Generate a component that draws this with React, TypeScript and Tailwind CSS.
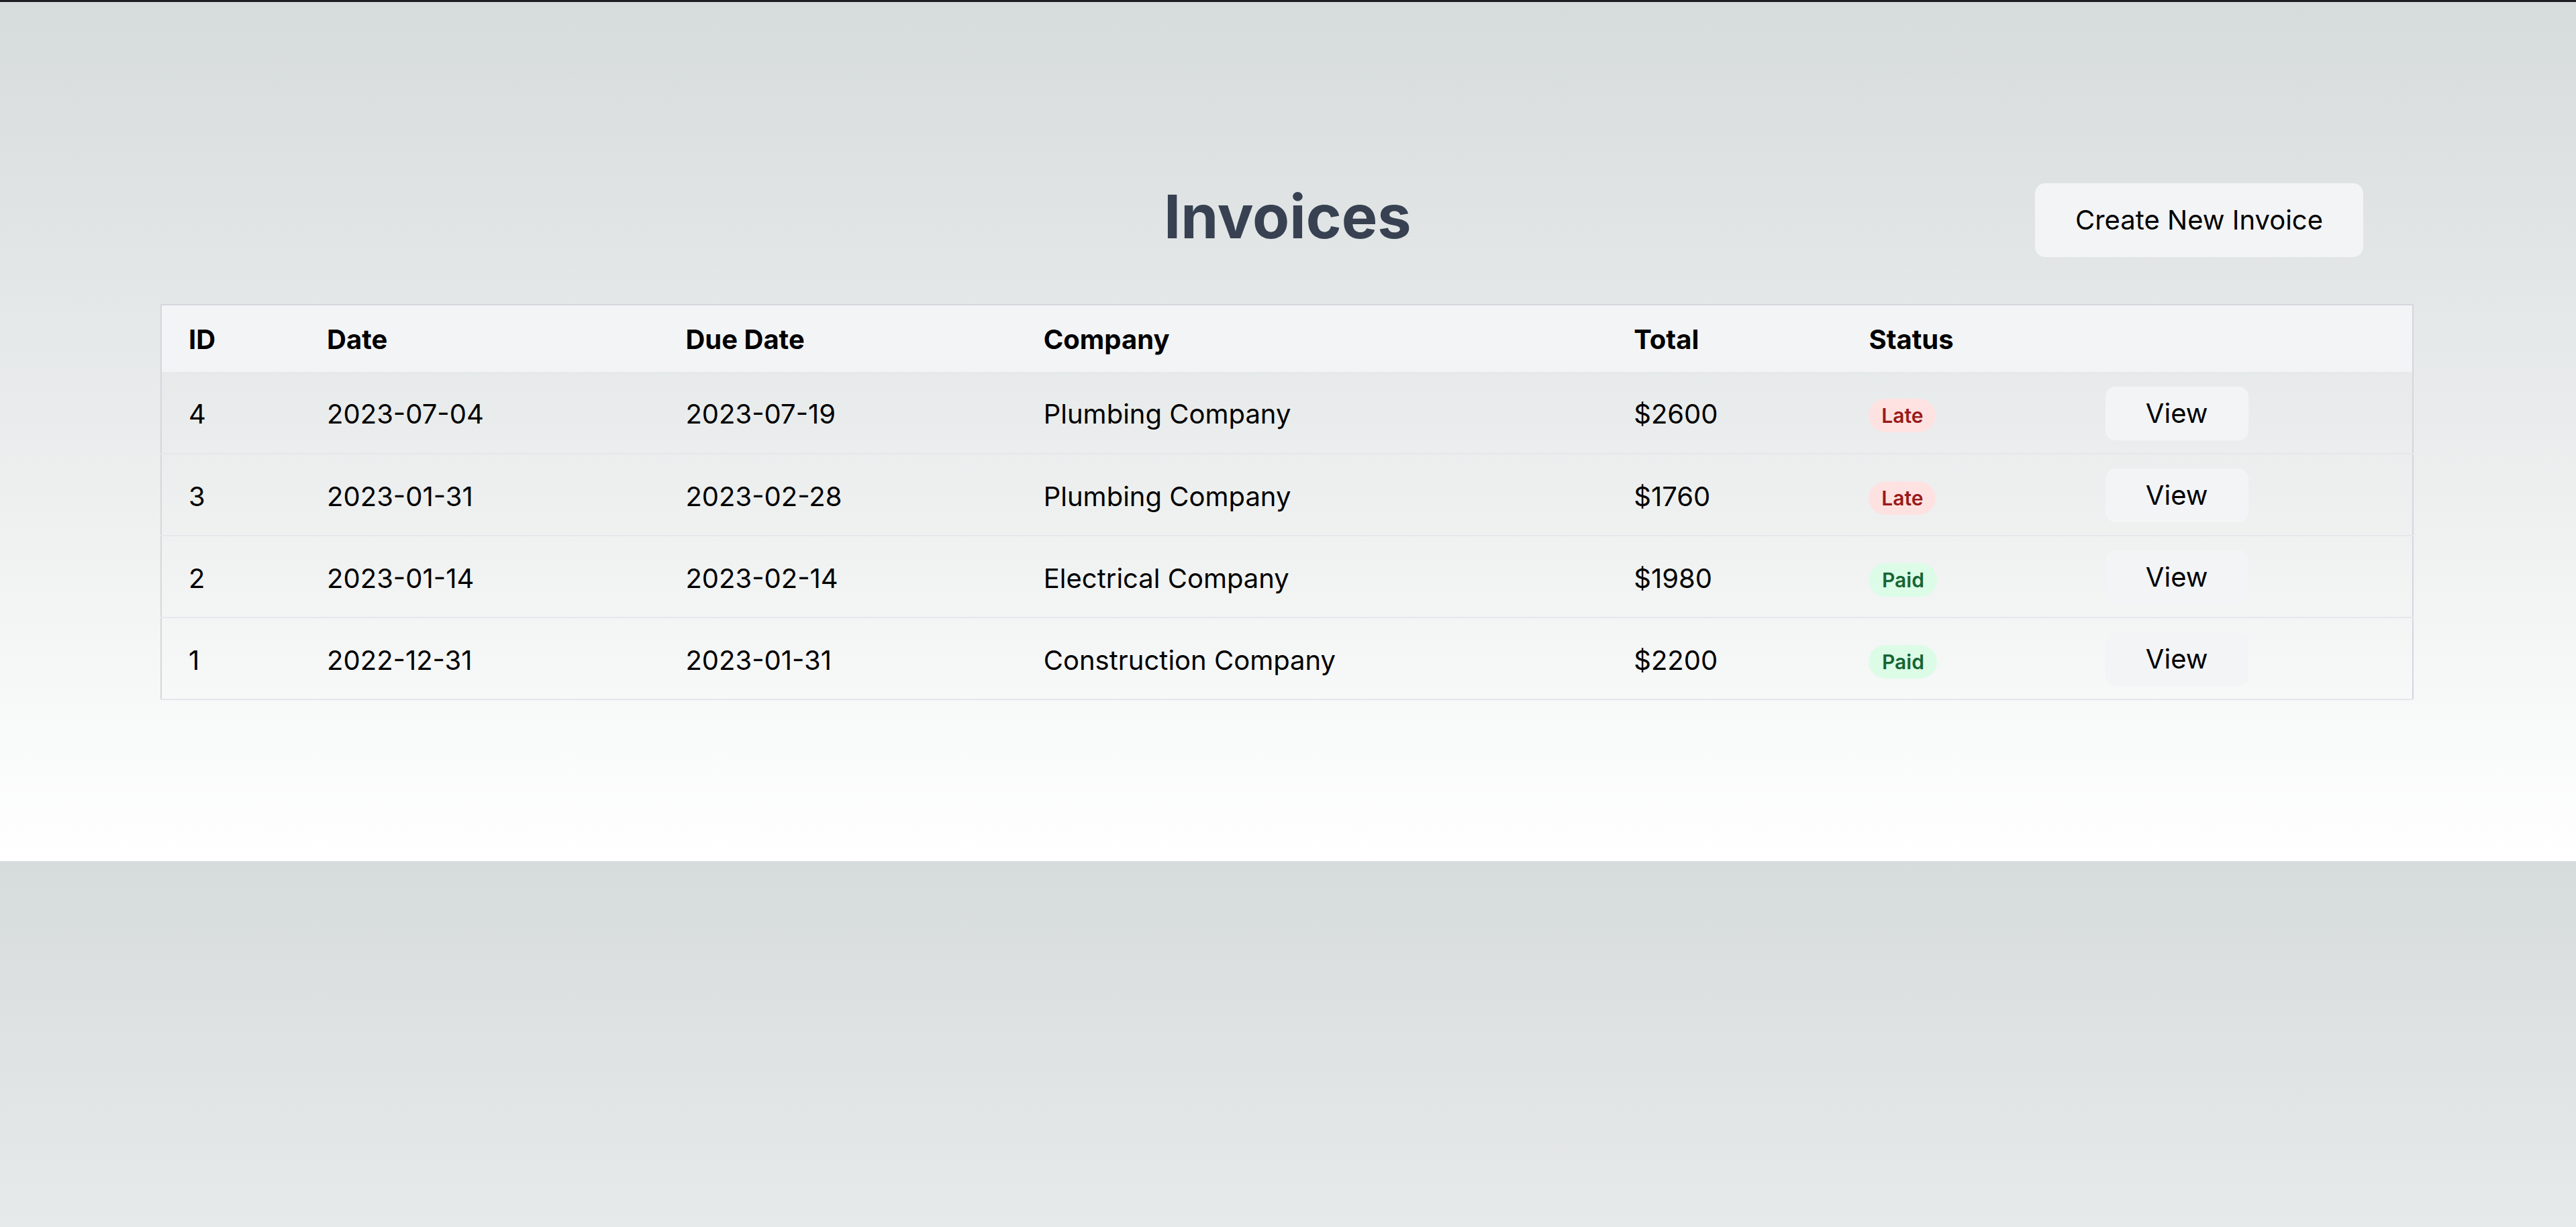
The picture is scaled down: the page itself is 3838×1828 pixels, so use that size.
const invoices = [
  { id: 4, date: '2023-07-04', due: '2023-07-19', company: 'Plumbing Company', total: '$2600', status: 'Late' },
  { id: 3, date: '2023-01-31', due: '2023-02-28', company: 'Plumbing Company', total: '$1760', status: 'Late' },
  { id: 2, date: '2023-01-14', due: '2023-02-14', company: 'Electrical Company', total: '$1980', status: 'Paid' },
  { id: 1, date: '2022-12-31', due: '2023-01-31', company: 'Construction Company', total: '$2200', status: 'Paid' },
];

function StatusBadge({ status }: { status: string }) {
  const late = status === 'Late';
  return (
    <span
      className={
        late
          ? 'inline-flex items-center justify-center w-[100px] h-[50px] rounded-full bg-[#fee2e2] text-[#991b1b] text-[30px] font-semibold'
          : 'inline-flex items-center justify-center w-[102px] h-[50px] rounded-full bg-[#dcfce7] text-[#166534] text-[30px] font-semibold'
      }
    >
      {status}
    </span>
  );
}

export default function App() {
  return (
    <div className="w-full h-[1828px] overflow-hidden font-['Inter','Liberation_Sans',sans-serif] text-black">
      <div className="h-[3px] bg-[#1c1d22]" />
      <div className="h-[1280px] bg-linear-to-b from-[#d6dbdb] to-white px-[239px] pt-[270px]">
        <div className="flex items-start h-[110px]">
          <div className="w-[1495px] shrink-0" />
          <h1 className="mt-[5px] text-[90px] leading-[90px] font-bold text-[#374151]">Invoices</h1>
          <div className="flex-1 flex justify-end pr-[78px]">
            <button className="w-[489px] h-[110px] rounded-[15px] bg-[#f3f4f6] text-[40px] leading-none text-black">
              Create New Invoice
            </button>
          </div>
        </div>

        <table className="mt-[70px] w-[3357px] table-fixed border-collapse border-2 border-[#d4d6dc] text-[40px] leading-none">
          <thead>
            <tr className="bg-[#f3f4f6] h-[100px] text-left font-bold">
              <th className="w-[207px] pl-[40px] pt-[2px]">ID</th>
              <th className="w-[534px] pl-[40px] pt-[2px]">Date</th>
              <th className="w-[533px] pl-[40px] pt-[2px]">Due Date</th>
              <th className="w-[879px] pl-[40px] pt-[2px]">Company</th>
              <th className="w-[350px] pl-[40px] pt-[2px]">Total</th>
              <th className="w-[352px] pl-[40px] pt-[2px]">Status</th>
              <th className="w-[498px] pl-[40px]"></th>
            </tr>
          </thead>
          <tbody>
            {invoices.map((inv) => (
              <tr key={inv.id} className="h-[122px] border-b-2 border-[#e5e7eb]">
                <td className="pl-[40px] pt-[5px]">{inv.id}</td>
                <td className="pl-[40px] pt-[5px]">{inv.date}</td>
                <td className="pl-[40px] pt-[5px]">{inv.due}</td>
                <td className="pl-[40px] pt-[5px]">{inv.company}</td>
                <td className="pl-[40px] pt-[5px]">{inv.total}</td>
                <td className="pl-[40px] pt-[9px]">
                  <StatusBadge status={inv.status} />
                </td>
                <td className="pl-[40px] pt-[2px]">
                  <button className="w-[213px] h-[80px] rounded-[15px] bg-[#f3f4f6] text-[40px] leading-none">View</button>
                </td>
              </tr>
            ))}
          </tbody>
        </table>
      </div>
      <div className="h-[545px] bg-linear-to-b from-[#d6dbdb] to-[#e7eaea]" />
    </div>
  );
}
